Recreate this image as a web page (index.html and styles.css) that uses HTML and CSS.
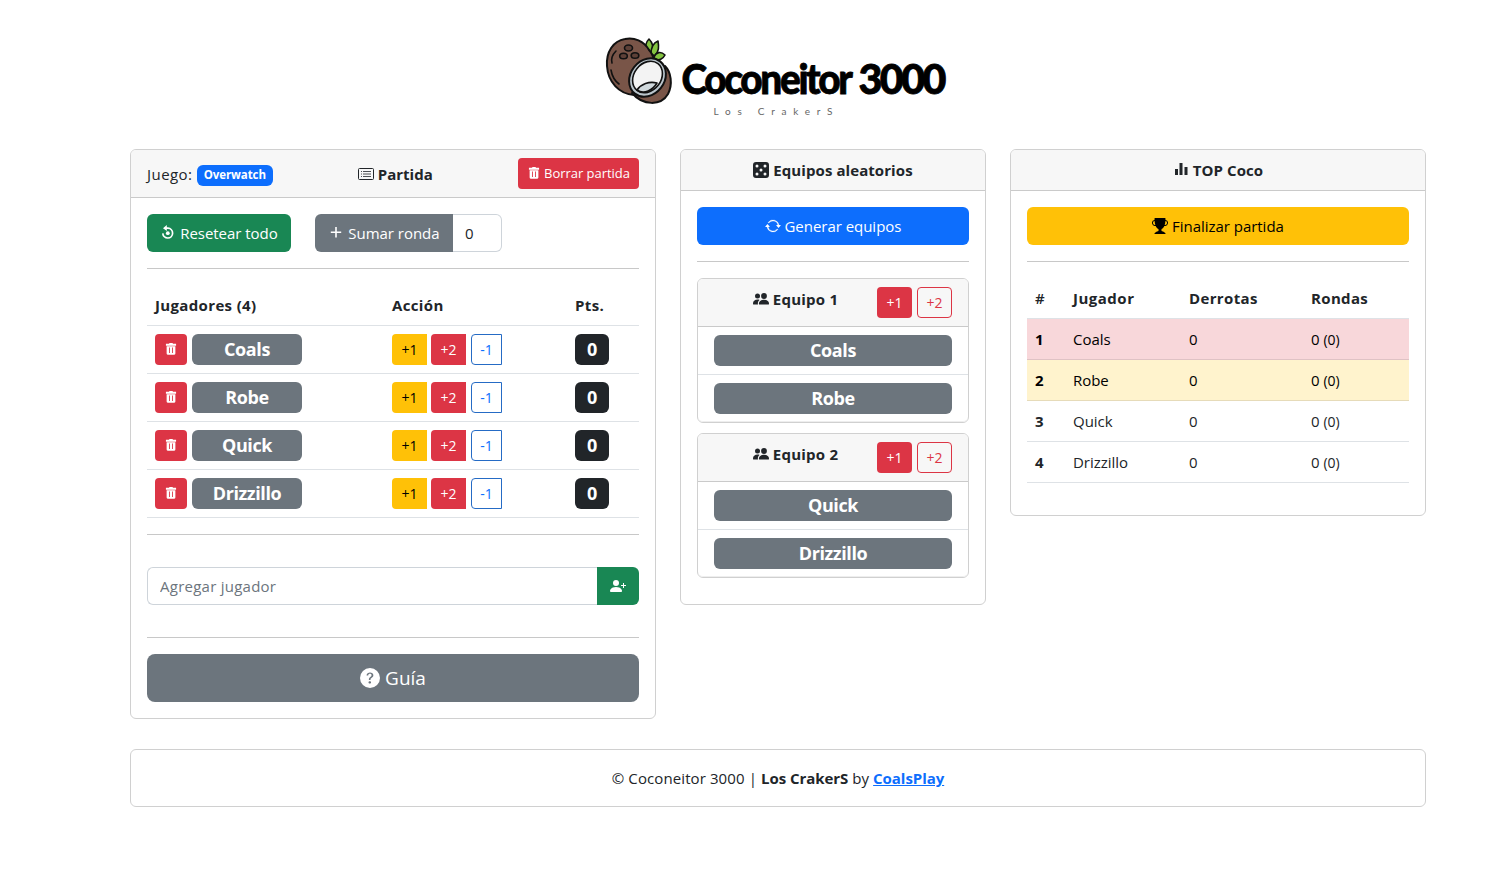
FILE: index.html
```html
<!DOCTYPE html>
<html lang="es">
<head>
<meta charset="utf-8">
<title>Coconeitor 3000</title>
<link rel="stylesheet" href="styles.css">
</head>
<body>
<svg class="sprite" aria-hidden="true">
  <symbol id="trash" viewBox="0 0 16 16"><path fill="currentColor" fill-rule="evenodd" d="M6 1h4v1h3.800v2.200H2.200V2H6zM3 4.800h10V13a1.700 1.700 0 0 1-1.700 1.700H4.700A1.700 1.700 0 0 1 3 13zM5.700 6.300v6.200h1V6.300zm3.600 0v6.200h1V6.300z"/></symbol>
  <symbol id="list" viewBox="0 0 16 16"><rect x=".5" y="2.500" width="15" height="11" rx="1" fill="none" stroke="currentColor"/><path stroke="currentColor" stroke-width=".8" d="M5 5.500h8M5 8h8M5 10.500h8M3 5.500h1M3 8h1M3 10.500h1"/></symbol>
  <symbol id="reset" viewBox="0 0 16 16"><path fill="none" stroke="currentColor" stroke-width="1.700" d="M6 3.200h2a4.900 4.900 0 1 1-5.200 5.200"/><path fill="currentColor" d="M6.800 0v6L3 3.200z"/><circle cx="7.800" cy="8.200" r="1.900" fill="currentColor"/></symbol>
  <symbol id="plus" viewBox="0 0 16 16"><path stroke="currentColor" stroke-width="1.600" d="M8 2v10.400M2.800 7.200h10.400"/></symbol>
  <symbol id="dice" viewBox="0 0 16 16"><path fill="currentColor" fill-rule="evenodd" d="M3 0h10a3 3 0 0 1 3 3v10a3 3 0 0 1-3 3H3a3 3 0 0 1-3-3V3a3 3 0 0 1 3-3m2.500 4a1.500 1.500 0 1 0-3 0 1.500 1.500 0 0 0 3 0m8 0a1.500 1.500 0 1 0-3 0 1.500 1.500 0 0 0 3 0m0 8a1.500 1.500 0 1 0-3 0 1.500 1.500 0 0 0 3 0m-8 0a1.500 1.500 0 1 0-3 0 1.500 1.500 0 0 0 3 0m4-4a1.500 1.500 0 1 0-3 0 1.500 1.500 0 0 0 3 0"/></symbol>
  <symbol id="repeat" viewBox="0 0 16 16"><path fill="currentColor" d="M11.534 7h3.932a.25.25 0 0 1 .192.410l-1.966 2.360a.25.25 0 0 1-.384 0l-1.966-2.360a.25.25 0 0 1 .192-.410m-11 2h3.932a.25.25 0 0 0 .192-.410L2.692 6.230a.25.25 0 0 0-.384 0L.342 8.590A.25.25 0 0 0 .534 9"/><path fill="currentColor" stroke="currentColor" stroke-width=".3" d="M8 3c-1.552 0-2.940.707-3.857 1.818a.5.5 0 1 1-.771-.636A6.002 6.002 0 0 1 13.917 7H12.900A5 5 0 0 0 8 3M3.100 9a5.002 5.002 0 0 0 8.757 2.182.5.5 0 1 1 .771.636A6.002 6.002 0 0 1 2.083 9z"/></symbol>
  <symbol id="people" viewBox="0 0 16 16"><g fill="currentColor"><circle cx="11" cy="5" r="2.900"/><path d="M6.500 13.500c-.6 0-.6-.5-.6-1C5.900 10.500 7.700 8.700 11 8.700s5 1.800 5 3.800c0 .5 0 1-.7 1z"/><circle cx="4.500" cy="5.100" r="2.500"/><path d="M5 13.500H.8c-.8 0-.8-.5-.8-1C0 10.300 1.700 8.600 4.700 8.600c.7 0 1.300.1 1.800.3C5 10 4.600 11.500 5 13.500"/></g></symbol>
  <symbol id="bars" viewBox="0 0 16 16"><path fill="currentColor" d="M2 7h3v6H2zM6.500 1h3v12h-3zM11.500 5h3v8h-3z"/></symbol>
  <symbol id="trophy" viewBox="0 0 16 16"><path fill="currentColor" d="M2.500.5A.5.5 0 0 1 3 0h10a.5.5 0 0 1 .5.5q0 .807-.034 1.536a3 3 0 1 1-1.133 5.890c-.790 1.865-1.878 2.777-2.833 3.011v2.173l1.425.356c.194.048.377.135.537.255L13.300 15.100a.5.5 0 0 1-.3.900H3a.5.5 0 0 1-.3-.9l1.838-1.379c.160-.120.343-.207.537-.255L6.500 13.110v-2.173c-.955-.234-2.043-1.146-2.833-3.012a3 3 0 1 1-1.132-5.890A33 33 0 0 1 2.500.5m.099 2.540a2 2 0 0 0 .720 3.935c-.333-1.050-.588-2.346-.720-3.935m10.083 3.935a2 2 0 0 0 .720-3.935c-.133 1.590-.388 2.885-.720 3.935"/></symbol>
  <symbol id="person" viewBox="0 0 16 16"><circle cx="6" cy="5" r="3" fill="currentColor"/><path fill="currentColor" d="M1 14s-1 0-1-1 1-4 6-4 6 3 6 4-1 1-1 1z"/><path stroke="currentColor" d="M13.500 5v5M11 7.500h5"/></symbol>
  <symbol id="help" viewBox="0 0 16 16"><path fill="currentColor" d="M16 8A8 8 0 1 1 0 8a8 8 0 0 1 16 0M5.496 6.033h.825c.138 0 .248-.113.266-.250.090-.656.540-1.134 1.342-1.134.686 0 1.314.343 1.314 1.168 0 .635-.374.927-.965 1.371-.673.489-1.206 1.060-1.168 1.987l.003.217a.25.25 0 0 0 .250.246h.811a.25.25 0 0 0 .250-.250v-.105c0-.718.273-.927 1.010-1.486.609-.463 1.244-.977 1.244-2.056 0-1.511-1.276-2.241-2.673-2.241-1.267 0-2.655.590-2.750 2.286a.237.237 0 0 0 .241.247m2.325 6.443c.610 0 1.029-.394 1.029-.927 0-.552-.420-.940-1.029-.940-.584 0-1.009.388-1.009.940 0 .533.425.927 1.010.927z"/></symbol>
</svg>

<div class="container">
  <header class="brand">
    <svg class="logo" viewBox="0 0 360 95" role="img" aria-label="Coconeitor 3000">
      <g stroke="#111" stroke-width="1.600" stroke-linejoin="round" stroke-linecap="round">
        <g fill="#84c441"><path d="M53 21c-4-4-2-9 1-12 4 4 5 8 3 14z"/><path d="M56 24c0-6 2-11 7-13 1 6 1 10-3 15z"/><path d="M59 27c2-5 7-6 11-2-2 4-6 6-10 4z"/></g>
        <path fill="#795548" stroke-width="2" d="M54 20C49 11 39 7 30 9 18 11 11 22 12 36c1 16 12 28 27 29 15 0 23-20 20-35-1-4-2-7-5-10z"/>
        <path fill="none" d="M21 21c-4 4-5 8-4 12M16 40c1 6 4 11 8 14"/>
        <g fill="#5d4037"><ellipse cx="33.500" cy="18" rx="4" ry="3"/><ellipse cx="28.500" cy="26" rx="3.800" ry="2.800"/><ellipse cx="40" cy="25.500" rx="3.800" ry="2.800"/></g>
        <path fill="#795548" stroke-width="2" d="M70 36c6 6 8 18 3 28-7 12-25 12-36-1z"/>
        <ellipse cx="52.500" cy="47.500" rx="17" ry="20.500" transform="rotate(38 52.500 47.500)" fill="#bac5cc" stroke-width="2"/>
        <ellipse cx="52.500" cy="47" rx="13.500" ry="17" transform="rotate(38 52.500 47)" fill="#f3f3f3"/>
        <path fill="#d0d8dc" d="M42 60c4-6 12-9 20-7-4 7-13 12-20 7z"/>
      </g>
      <text class="logo-name" x="86.500" y="63.500" textLength="169" lengthAdjust="spacingAndGlyphs">Coconeitor</text>
      <text class="logo-name" x="263.500" y="63.500" textLength="85.500" lengthAdjust="spacingAndGlyphs">3000</text>
      <text class="logo-tag" x="118.500" y="85" textLength="119">Los CrakerS</text>
    </svg>
  </header>

  <main class="columns">
    <section class="card">
      <div class="card-header match-header">
        <div>Juego: <span class="tag">Overwatch</span></div>
        <div class="title"><svg class="icon"><use href="#list"/></svg> Partida</div>
        <button class="btn sm red"><svg class="icon"><use href="#trash"/></svg> Borrar partida</button>
      </div>
      <div class="card-body">
        <div class="toolbar">
          <button class="btn green"><svg class="icon"><use href="#reset"/></svg> Resetear todo</button>
          <div class="group"><button class="btn gray"><svg class="icon"><use href="#plus"/></svg> Sumar ronda</button><div class="field rounds">0</div></div>
        </div>
        <hr>
        <table class="players">
          <colgroup><col class="c-name"><col class="c-action"><col></colgroup>
          <thead><tr><th>Jugadores (4)</th><th>Acción</th><th>Pts.</th></tr></thead>
          <tbody>
            <tr><td><div class="row"><button class="btn sm red bin"><svg class="icon"><use href="#trash"/></svg></button><span class="badge name">Coals</span></div></td><td><div class="row acts"><button class="btn sm yellow">+1</button><button class="btn sm red">+2</button><button class="btn sm line-blue">-1</button></div></td><td><span class="badge pts">0</span></td></tr>
            <tr><td><div class="row"><button class="btn sm red bin"><svg class="icon"><use href="#trash"/></svg></button><span class="badge name">Robe</span></div></td><td><div class="row acts"><button class="btn sm yellow">+1</button><button class="btn sm red">+2</button><button class="btn sm line-blue">-1</button></div></td><td><span class="badge pts">0</span></td></tr>
            <tr><td><div class="row"><button class="btn sm red bin"><svg class="icon"><use href="#trash"/></svg></button><span class="badge name">Quick</span></div></td><td><div class="row acts"><button class="btn sm yellow">+1</button><button class="btn sm red">+2</button><button class="btn sm line-blue">-1</button></div></td><td><span class="badge pts">0</span></td></tr>
            <tr><td><div class="row"><button class="btn sm red bin"><svg class="icon"><use href="#trash"/></svg></button><span class="badge name">Drizzillo</span></div></td><td><div class="row acts"><button class="btn sm yellow">+1</button><button class="btn sm red">+2</button><button class="btn sm line-blue">-1</button></div></td><td><span class="badge pts">0</span></td></tr>
          </tbody>
        </table>
        <hr>
        <div class="group add"><input class="field" placeholder="Agregar jugador"><button class="btn green" aria-label="Agregar"><svg class="icon"><use href="#person"/></svg></button></div>
        <hr>
        <button class="btn gray guide"><svg class="icon"><use href="#help"/></svg> Guía</button>
      </div>
    </section>

    <section class="card">
      <div class="card-header title"><svg class="icon"><use href="#dice"/></svg> Equipos aleatorios</div>
      <div class="card-body">
        <button class="btn blue wide"><svg class="icon"><use href="#repeat"/></svg> Generar equipos</button>
        <hr>
        <div class="card team">
          <div class="card-header team-header"><div class="title"><svg class="icon"><use href="#people"/></svg> Equipo 1</div><div class="row"><button class="btn sm red">+1</button><button class="btn sm line-red">+2</button></div></div>
          <div class="member"><span class="badge">Coals</span></div>
          <div class="member"><span class="badge">Robe</span></div>
        </div>
        <div class="card team">
          <div class="card-header team-header"><div class="title"><svg class="icon"><use href="#people"/></svg> Equipo 2</div><div class="row"><button class="btn sm red">+1</button><button class="btn sm line-red">+2</button></div></div>
          <div class="member"><span class="badge">Quick</span></div>
          <div class="member"><span class="badge">Drizzillo</span></div>
        </div>
      </div>
    </section>

    <section class="card">
      <div class="card-header title"><svg class="icon"><use href="#bars"/></svg> TOP Coco</div>
      <div class="card-body">
        <button class="btn yellow wide"><svg class="icon"><use href="#trophy"/></svg> Finalizar partida</button>
        <hr>
        <table class="ranking">
          <colgroup><col class="c-pos"><col class="c-player"><col class="c-losses"><col></colgroup>
          <thead><tr><th>#</th><th>Jugador</th><th>Derrotas</th><th>Rondas</th></tr></thead>
          <tbody>
            <tr class="first"><th>1</th><td>Coals</td><td>0</td><td>0 <small>(0)</small></td></tr>
            <tr class="second"><th>2</th><td>Robe</td><td>0</td><td>0 <small>(0)</small></td></tr>
            <tr><th>3</th><td>Quick</td><td>0</td><td>0 <small>(0)</small></td></tr>
            <tr><th>4</th><td>Drizzillo</td><td>0</td><td>0 <small>(0)</small></td></tr>
          </tbody>
        </table>
      </div>
    </section>
  </main>

  <footer class="card footer"><p>© Coconeitor 3000 | <b>Los CrakerS</b> by <a href="#">CoalsPlay</a></p></footer>
</div>
</body>
</html>
```

FILE: styles.css
```css
* { box-sizing: border-box; }
body { margin: 0; background: #fff; color: #212529; font: 15px/24px "Open Sans", "Noto Sans", sans-serif; letter-spacing: -.03px; }
.sprite { display: none; }
.container { width: 1296px; margin-left: 130px; }
.brand { height: 149px; display: flex; justify-content: center; padding-top: 30px; }
.logo { display: block; width: 360px; height: 95px; margin-right: 6px; }
.logo-name { font: 900 41px Lato, sans-serif; letter-spacing: -2.500px; fill: #000; stroke: #000; stroke-width: .8px; }
.logo-tag { font: 400 10px Lato, sans-serif; fill: #666; }
.columns { display: grid; grid-template-columns: 526px 306px 416px; gap: 24px; align-items: start; }
.card { border: 1px solid #d0d0d0; border-radius: 6px; background: #fff; }
.card-header { background: #f7f7f7; border-bottom: 1px solid #cacaca; padding: 8px 16px; border-radius: 5px 5px 0 0; text-align: center; }
.card-body { padding: 16px; }
.title { font-weight: 700; letter-spacing: .08px; }
.match-header { display: flex; justify-content: space-between; align-items: center; }
.match-header > div:first-child { letter-spacing: .45px; padding-top: 1px; }
.match-header .title { letter-spacing: 0; }
.tag { display: inline-block; vertical-align: 1px; background: #0d6efd; color: #fff; border-radius: 6px; padding: 4px 7px 5px; font-size: 11.500px; line-height: 12px; font-weight: 700; letter-spacing: -.1px; }
.icon { width: 16px; height: 16px; vertical-align: -2px; }
.btn { font: inherit; letter-spacing: inherit; border: 1px solid transparent; border-radius: 6px; padding: 6px 12px; color: #fff; height: 38px; white-space: nowrap; }
.sm { height: 31px; font-size: 13px; line-height: 21px; padding: 4px 8px; border-radius: 4px; }
.sm .icon { width: 14px; height: 14px; vertical-align: -2px; }
.row .sm { font-size: 14px; }
.row .bin .icon { vertical-align: -1px; }
.red { background: #dc3545; }
.green { background: #198754; }
.gray { background: #6c757d; }
.blue { background: #0d6efd; }
.yellow { background: #ffc107; color: #000; }
.line-red { background: transparent; border-color: #dc3545; color: #dc3545; }
.line-blue { background: #fff; border-color: #0d6efd; color: #0d6efd; }
.wide { display: block; width: 100%; }
hr { border: 0; height: 1px; background: #c8c8c8; margin: 16px 0; }
.toolbar { display: flex; gap: 24px; }
.toolbar > .btn { width: 144px; }
.group { display: flex; }
.group .btn:first-child { border-radius: 6px 0 0 6px; width: 138px; }
.group .btn:last-child { border-radius: 0 6px 6px 0; width: 42px; }
.field { font: inherit; letter-spacing: .25px; height: 38px; border: 1px solid #ced4da; padding: 6px 12px; background: #fff; color: #212529; }
.field::placeholder { color: #6c757d; opacity: 1; }
.rounds { width: 49px; border-left: 0; border-radius: 0 6px 6px 0; }
.add { margin: 32px 0; }
.add .field { flex: 1; border-right: 0; border-radius: 6px 0 0 6px; }
table { width: 100%; table-layout: fixed; border-collapse: separate; border-spacing: 0; }
th, td { height: 41px; padding: 8px; border-bottom: 1px solid #dee2e6; text-align: left; vertical-align: top; }
th { letter-spacing: .35px; }
.ranking thead th:nth-child(2) { letter-spacing: .5px; }
.players td { height: 48px; }
.c-name { width: 237px; }
.c-action { width: 183px; }
.c-pos { width: 38px; }
.c-player { width: 116px; }
.c-losses { width: 122px; }
.row { display: flex; gap: 5px; }
.row .btn { width: 35px; padding: 4px 0; }
.row .bin { width: 32px; }
.acts { gap: 4px; }
.acts .btn { border-radius: 4px 0 0 4px; }
.acts .line-blue { width: 31px; margin-left: 1px; border-color: #256bc5; }
.badge { display: block; height: 31px; border-radius: 6px; background: #6c757d; color: #fff; text-align: center; font-size: 18px; font-weight: 700; line-height: 31px; letter-spacing: -.4px; }
.name { width: 110px; }
.pts { width: 34px; background: #212529; }
.guide { display: block; width: 100%; height: 48px; border-radius: 8px; font-size: 19px; line-height: 34px; padding: 6px 12px; }
.guide .icon { width: 20px; height: 20px; vertical-align: -3px; }
.team { margin-bottom: 10px; }
.team-header { display: grid; grid-template-columns: 1fr 75px; }
.team-header .title { letter-spacing: .25px; }
.member { height: 48px; padding: 8px 16px; border-bottom: 1px solid #dee2e6; }
.member:last-child { height: 47px; border-bottom-color: #eee; border-radius: 0 0 5px 5px; }
.ranking { margin-bottom: 16px; color: #212529; }
.ranking thead th:first-child { font-weight: 600; }
.first { background: #f8d7da; color: #000; }
.second { background: #fff3cd; color: #000; }
.first > * { border-color: #dfc2c4; }
.second > * { border-color: #e6dbb9; }
small { font-size: 14px; line-height: 1; }
.footer { margin-top: 30px; height: 58px; padding: 16px; text-align: center; }
.footer p { margin: 0; letter-spacing: .1px; }
.footer b, .footer a { font-weight: 700; letter-spacing: -.05px; }
.footer a { color: #0d6efd; }
```
